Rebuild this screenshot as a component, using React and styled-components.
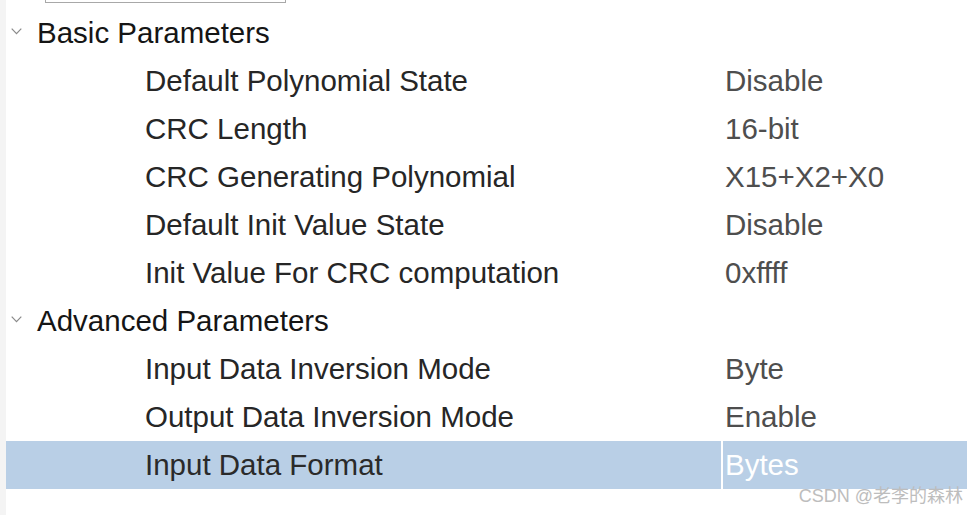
import React from "react";
import styled, { createGlobalStyle } from "styled-components";

const Global = createGlobalStyle`
  html, body { margin: 0; padding: 0; background: #fff; }
  body { font-family: "Liberation Sans", Arial, sans-serif; }
`;

const Page = styled.div`
  position: relative;
  display: flex;
  width: 967px;
  height: 515px;
  overflow: hidden;
  background: #fff;
`;

const Gutter = styled.div`
  width: 6px;
  flex: none;
  background: #f4f4f4;
`;

const Main = styled.div`
  flex: 1;
  display: flex;
  flex-direction: column;
`;

const TopField = styled.div`
  margin-left: 39px;
  width: 239px;
  height: 2px;
  border: 1px solid #a8a8a8;
  border-top: none;
  background: #fff;
  margin-bottom: 6px;
`;

const Row = styled.div`
  display: flex;
  align-items: center;
  height: 48px;
  background: ${(p) => (p.$selected ? "#b9cfe6" : "transparent")};
  font-size: 29.5px;
`;

const Chevron = styled.svg`
  width: 11px;
  height: 7px;
  margin-left: 5px;
  margin-right: 15px;
  margin-top: -3px;
  flex: none;
`;

const GroupTitle = styled.span`
  color: #151515;
`;

const Label = styled.div`
  width: 715px;
  padding-left: 139px;
  box-sizing: border-box;
  color: ${(p) => (p.$selected ? "#2a2a2a" : "#262626")};
  flex: none;
`;

const Divider = styled.div`
  width: 2px;
  align-self: stretch;
  background: ${(p) => (p.$selected ? "#fff" : "transparent")};
  flex: none;
`;

const Value = styled.div`
  padding-left: 2px;
  color: ${(p) => (p.$selected ? "#fff" : "#4e4e4e")};
`;

const Watermark = styled.div`
  position: absolute;
  right: 4px;
  bottom: 8px;
  font-family: "Liberation Sans", "Noto Sans CJK SC", sans-serif;
  font-size: 18px;
  color: #bdbdbd;
`;

const groups = [
  {
    title: "Basic Parameters",
    rows: [
      ["Default Polynomial State", "Disable"],
      ["CRC Length", "16-bit"],
      ["CRC Generating Polynomial", "X15+X2+X0"],
      ["Default Init Value State", "Disable"],
      ["Init Value For CRC computation", "0xffff"],
    ],
  },
  {
    title: "Advanced Parameters",
    rows: [
      ["Input Data Inversion Mode", "Byte"],
      ["Output Data Inversion Mode", "Enable"],
      ["Input Data Format", "Bytes", true],
    ],
  },
];

export default function App() {
  return (
    <>
      <Global />
      <Page>
        <Gutter />
        <Main>
          <TopField />
          {groups.map((g) => (
            <React.Fragment key={g.title}>
              <Row>
                <Chevron viewBox="0 0 11 7">
                  <path d="M0.7 0.7 L5.5 5.7 L10.3 0.7" fill="none" stroke="#8a8a8a" strokeWidth="1.2" />
                </Chevron>
                <GroupTitle>{g.title}</GroupTitle>
              </Row>
              {g.rows.map(([l, v, sel]) => (
                <Row key={l} $selected={sel}>
                  <Label $selected={sel}>{l}</Label>
                  <Divider $selected={sel} />
                  <Value $selected={sel}>{v}</Value>
                </Row>
              ))}
            </React.Fragment>
          ))}
        </Main>
        <Watermark>CSDN @老李的森林</Watermark>
      </Page>
    </>
  );
}
